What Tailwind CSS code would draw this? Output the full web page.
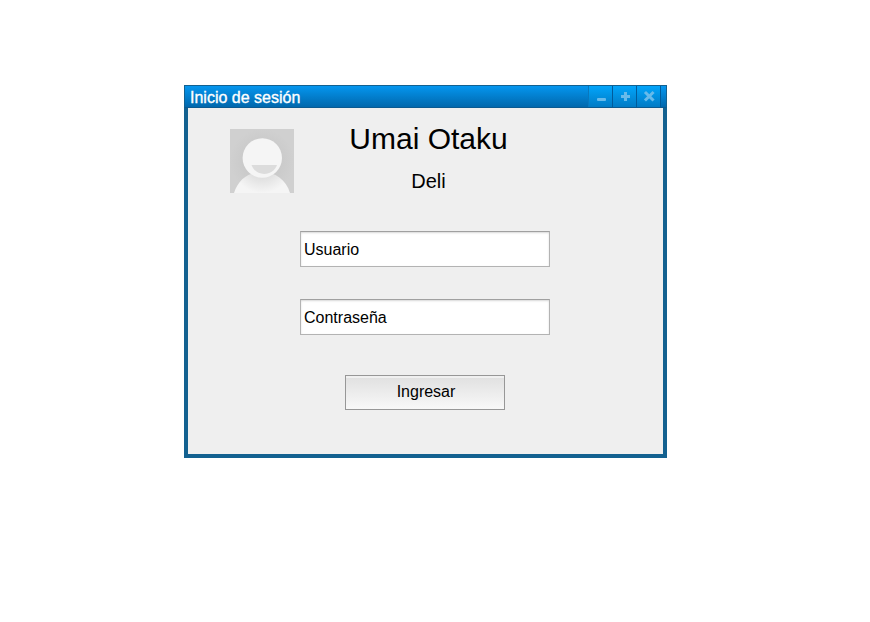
<!DOCTYPE html>
<html lang="es">
<head>
<meta charset="utf-8">
<title>Inicio de sesión</title>
<script src="https://cdn.jsdelivr.net/npm/@tailwindcss/browser@4"></script>
</head>
<body class="h-screen overflow-hidden bg-white pt-[85px] pl-[184px] font-['Liberation_Sans',Arial,sans-serif] text-black">
<main class="flex h-[373px] w-[483px] flex-col bg-[#136190]">
  <header class="flex h-[23px] shrink-0 justify-between border border-[#136190] border-b-[#0a5a91] bg-linear-to-b from-[#0596ef] to-[#0168ad] pl-[5px]">
    <h1 class="pt-[3px] text-base leading-[18px] text-white [-webkit-text-stroke:0.35px_white]">Inicio de sesión</h1>
    <div class="mr-[5px] flex h-[21px] border-l border-[#0878be]">
      <button class="flex w-6 items-center justify-center border-r border-[#005b9b] bg-linear-to-b from-[#02a5fb] to-[#017bc5]" aria-label="Minimizar">
        <svg width="23" height="21" viewBox="0 0 23 21"><rect x="8" y="12" width="9" height="3" rx="1" fill="#67baea"/></svg>
      </button>
      <button class="flex w-6 items-center justify-center border-r border-[#005b9b] bg-linear-to-b from-[#02a5fb] to-[#017bc5]" aria-label="Maximizar">
        <svg width="23" height="21" viewBox="0 0 23 21"><path d="M12.500 6v9M8 10.500h9" stroke="#67baea" stroke-width="3"/></svg>
      </button>
      <button class="flex w-6 items-center justify-center border-r border-[#005b9b] bg-linear-to-b from-[#02a5fb] to-[#017bc5]" aria-label="Cerrar">
        <svg width="23" height="21" viewBox="0 0 23 21"><path d="M9 7l6.500 6.500M15.500 7L9 13.500" stroke="#67baea" stroke-width="3" stroke-linecap="square"/></svg>
      </button>
    </div>
  </header>
  <section class="mx-1 mb-1 flex grow flex-col items-center bg-[#efefef] pr-px">
    <div class="flex h-[123px] w-full">
      <svg class="mt-[21px] ml-[42px] shrink-0" width="64" height="64" viewBox="0 0 64 64">
        <defs>
          <radialGradient id="bg"><stop offset="0" stop-color="#c2c2c2"/><stop offset="1" stop-color="#d0d0d0"/></radialGradient>
          <radialGradient id="body" gradientUnits="userSpaceOnUse" cx="32" cy="34" r="30"><stop offset=".45" stop-color="#dedede"/><stop offset="1" stop-color="#f5f5f5"/></radialGradient>
        </defs>
        <rect width="64" height="64" fill="url(#bg)"/>
        <path d="M4 64C8 51 18 43 32 43s24 8 28 21z" fill="url(#body)"/>
        <circle cx="32.3" cy="29" r="19.7" fill="#f5f5f5"/>
        <path d="M21.5 36h25.500C45 41.500 40 45 34.250 45S23.500 41.500 21.500 36z" fill="#dcdcdc"/>
      </svg>
      <div class="ml-[54px] w-[161px] pt-4 text-center">
        <h2 class="text-[30px] leading-[30px] whitespace-nowrap">Umai Otaku</h2>
        <p class="mt-[17px] text-xl leading-5">Deli</p>
      </div>
    </div>
    <input type="text" value="Usuario" aria-label="Usuario" class="h-9 w-[250px] border border-[#b3b3b3] border-t-[#a0a0a0] bg-white px-[3px] pt-px text-base shadow-[inset_0_1px_2px_#d8d8d8]">
    <input type="text" value="Contraseña" aria-label="Contraseña" class="mt-8 h-9 w-[250px] border border-[#b3b3b3] border-t-[#a0a0a0] bg-white px-[3px] pt-px text-base shadow-[inset_0_1px_2px_#d8d8d8]">
    <button class="mt-10 h-[35px] w-40 border border-[#979797] bg-linear-to-b from-[#e0e0e0] to-[#f8f8f8] pb-0.5 pl-0.5 text-base shadow-[inset_0_2px_0_#f0f0f0]">Ingresar</button>
  </section>
</main>
</body>
</html>
